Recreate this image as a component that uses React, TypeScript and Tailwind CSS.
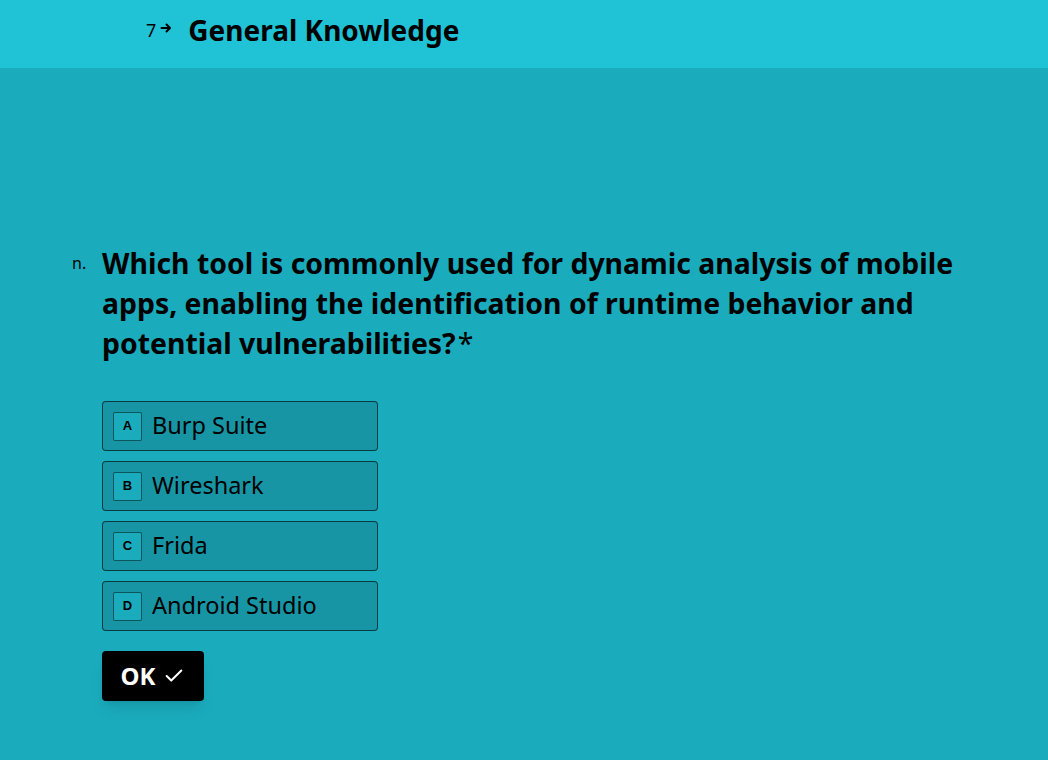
import React, { useState } from 'react';
import { Check } from 'lucide-react';

const OPTIONS = [
  { key: 'A', label: 'Burp Suite' },
  { key: 'B', label: 'Wireshark' },
  { key: 'C', label: 'Frida' },
  { key: 'D', label: 'Android Studio' },
];

const font = { fontFamily: '"Noto Sans", "Open Sans", sans-serif' };

export default function App() {
  const [selected, setSelected] = useState<string | null>(null);

  return (
    <div className="min-h-[760px] bg-[#1aacbd] text-black" style={font}>
      <header className="h-[68px] bg-[#1fc3d5] flex items-center pl-[146px] pb-[9px]">
        <span className="text-[18px] leading-none">7</span>
        <svg viewBox="0 0 12 12" className="w-[12px] h-[12px] ml-[4px] mb-[4px]" fill="none" stroke="currentColor" strokeWidth="2" strokeLinecap="round" strokeLinejoin="round">
          <path d="M1.5 6h8.5M6.5 2.5 10 6l-3.5 3.5" />
        </svg>
        <h1 className="ml-[16px] text-[28px] font-bold leading-none">General Knowledge</h1>
      </header>

      <main className="pt-[175px] pl-[72px] pr-[70px]">
        <div className="flex">
          <span className="w-[30px] text-[16px] leading-[40px]">n.</span>
          <div className="flex-1">
            <h2 className="text-[28.4px] font-bold leading-[40px] max-w-[900px]">
              Which tool is commonly used for dynamic analysis of mobile apps, enabling the identification of runtime behavior and potential vulnerabilities?
              <span className="font-normal ml-[2px]">*</span>
            </h2>

            <div className="mt-[38px] flex flex-col gap-[10px] w-[276px]">
              {OPTIONS.map((opt) => (
                <button
                  key={opt.key}
                  type="button"
                  onClick={() => setSelected(opt.key)}
                  className={`h-[50px] flex items-center gap-[10px] px-[10px] rounded-[4px] border border-black/60 text-left ${
                    selected === opt.key ? 'bg-[#128896]' : 'bg-[#1795a4]'
                  }`}
                >
                  <span className="w-[29px] h-[29px] flex items-center justify-center border border-black/50 rounded-[2px] bg-[#1aacbd] text-[13px] font-bold" style={{ fontFamily: '"Liberation Sans", Arial, sans-serif' }}>
                    {opt.key}
                  </span>
                  <span className="text-[23.5px] leading-none">{opt.label}</span>
                </button>
              ))}
            </div>

            <button
              type="button"
              className="mt-[20px] h-[50px] w-[102px] flex items-center justify-center gap-[8px] bg-black text-white rounded-[4px] shadow-lg"
            >
              <span className="text-[24px] font-bold leading-none">OK</span>
              <Check className="w-[22px] h-[22px]" strokeWidth={2.2} />
            </button>
          </div>
        </div>
      </main>
    </div>
  );
}
